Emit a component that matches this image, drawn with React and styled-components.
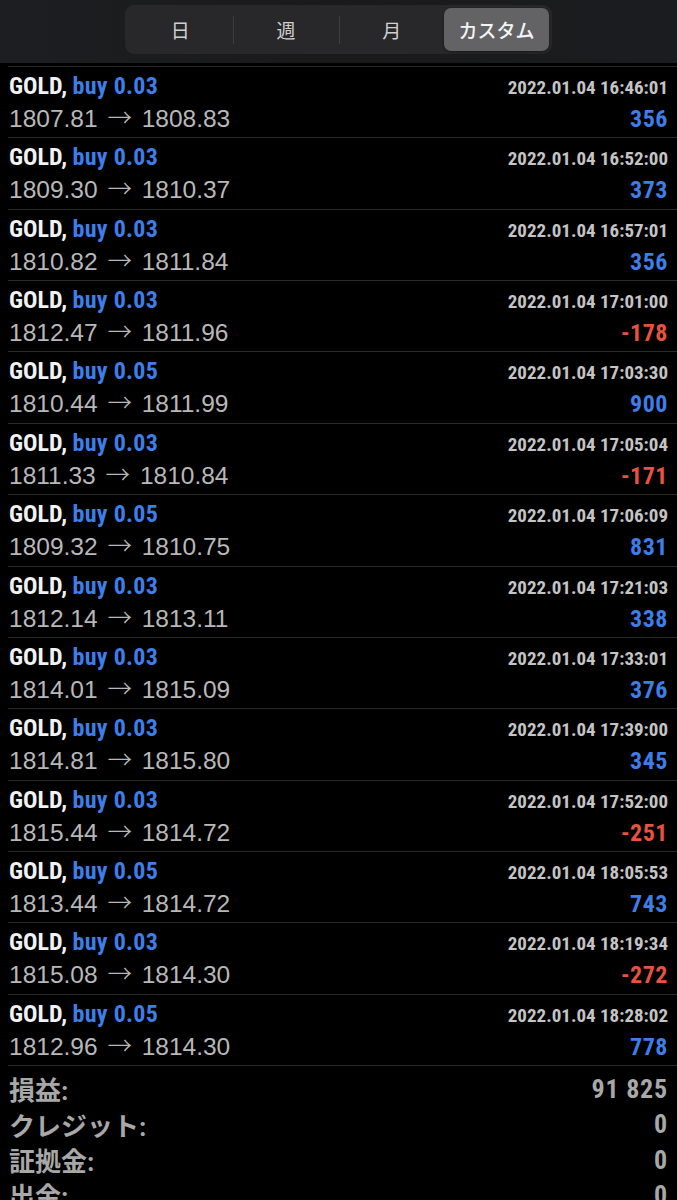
import React from "react";
import styled, { createGlobalStyle } from "styled-components";

const GlobalStyle = createGlobalStyle`
  body {
    margin: 0;
    background: #000;
    font-family: "Liberation Sans", "Noto Sans CJK JP", sans-serif;
  }
`;

// condensed bold face, like the app's Helvetica Condensed
const CONDENSED = `"Roboto", "Noto Sans CJK JP", sans-serif`;

const Screen = styled.div`
  width: 677px;
  height: 1200px;
  overflow: hidden;
  background: #000;
`;

const Header = styled.div`
  height: 63px;
  box-sizing: border-box;
  padding-top: 5px;
  display: flex;
  justify-content: center;
  background: linear-gradient(90deg, #1d1e21 0%, #1a1a1b 50%, #1b1c1f 100%);
`;

const Segments = styled.div`
  width: 427px;
  height: 49px;
  box-sizing: border-box;
  padding: 3px;
  display: flex;
  align-items: stretch;
  border-radius: 9px;
  background: #28282a;
`;

const Segment = styled.div`
  flex: 1;
  display: flex;
  align-items: center;
  justify-content: center;
  border-radius: 7px;
  font-family: "Noto Sans CJK JP", sans-serif;
  font-size: 19px;
  font-weight: ${(p) => (p.active ? 500 : 400)};
  color: ${(p) => (p.active ? "#f4f4f4" : "#d0d0d0")};
  background: ${(p) => (p.active ? "#636366" : "transparent")};
  box-shadow: ${(p) => (p.active ? "0 1px 3px rgba(0,0,0,0.4)" : "none")};
`;

const Divider = styled.div`
  width: 1px;
  height: 28px;
  align-self: center;
  background: ${(p) => (p.hidden ? "transparent" : "#3e3e41")};
`;

const List = styled.div`
  padding-top: 3px;
`;

const Row = styled.div`
  height: 71.36px;
  box-sizing: border-box;
  margin-left: 8px;
  padding: 4px 9px 0 1px;
  border-top: 1px solid #2a2a2c;
  display: flex;
  flex-direction: column;
  gap: 1px;
`;

const Line = styled.div`
  height: 30px;
  display: flex;
  justify-content: space-between;
  align-items: baseline;
  line-height: 30px;
`;

const Symbol = styled.span`
  font-family: ${CONDENSED};
  font-stretch: 75%;
  font-weight: 700;
  font-size: 24px;
  color: #f2f2f2;
`;

const Side = styled.span`
  color: #3d7ee9;
  letter-spacing: 0.3px;
`;

const Time = styled.span`
  font-family: ${CONDENSED};
  font-stretch: 75%;
  font-weight: 700;
  font-size: 19px;
  color: #c4c4c4;
`;

const Prices = styled.span`
  font-family: "Liberation Sans", sans-serif;
  font-size: 24.5px;
  color: #b8b8b8;
`;

const Arrow = styled.span`
  font-family: "Noto Sans CJK JP", sans-serif;
  font-weight: 300;
  margin: 0 3px;
`;

const Profit = styled.span`
  font-family: ${CONDENSED};
  font-stretch: 75%;
  font-weight: 700;
  font-size: 24px;
  letter-spacing: 0.5px;
  color: ${(p) => (p.loss ? "#e8533f" : "#3d7ee9")};
`;

const Summary = styled.div`
  margin-left: 8px;
  padding: 5px 9px 0 1px;
  border-top: 1px solid #2a2a2c;
`;

const SummaryRow = styled.div`
  height: 35.4px;
  display: flex;
  justify-content: space-between;
  align-items: center;
  font-family: ${CONDENSED};
  font-stretch: 75%;
  font-weight: 700;
  font-size: 26px;
  color: #a8a8a8;
`;

const SummaryValue = styled.span`
  letter-spacing: 0.8px;
`;

const trades = [
  ["0.03", "2022.01.04 16:46:01", "1807.81", "1808.83", "356"],
  ["0.03", "2022.01.04 16:52:00", "1809.30", "1810.37", "373"],
  ["0.03", "2022.01.04 16:57:01", "1810.82", "1811.84", "356"],
  ["0.03", "2022.01.04 17:01:00", "1812.47", "1811.96", "-178"],
  ["0.05", "2022.01.04 17:03:30", "1810.44", "1811.99", "900"],
  ["0.03", "2022.01.04 17:05:04", "1811.33", "1810.84", "-171"],
  ["0.05", "2022.01.04 17:06:09", "1809.32", "1810.75", "831"],
  ["0.03", "2022.01.04 17:21:03", "1812.14", "1813.11", "338"],
  ["0.03", "2022.01.04 17:33:01", "1814.01", "1815.09", "376"],
  ["0.03", "2022.01.04 17:39:00", "1814.81", "1815.80", "345"],
  ["0.03", "2022.01.04 17:52:00", "1815.44", "1814.72", "-251"],
  ["0.05", "2022.01.04 18:05:53", "1813.44", "1814.72", "743"],
  ["0.03", "2022.01.04 18:19:34", "1815.08", "1814.30", "-272"],
  ["0.05", "2022.01.04 18:28:02", "1812.96", "1814.30", "778"],
];

const totals = [
  ["損益:", "91 825"],
  ["クレジット:", "0"],
  ["証拠金:", "0"],
  ["出金:", "0"],
];

const tabs = ["日", "週", "月", "カスタム"];
const activeTab = 3;

const App = () => {
  return (
    <Screen>
      <GlobalStyle />
      <Header>
        <Segments>
          {tabs.map((t, i) => (
            <React.Fragment key={t}>
              {i > 0 && <Divider hidden={i === activeTab || i - 1 === activeTab} />}
              <Segment active={i === activeTab}>{t}</Segment>
            </React.Fragment>
          ))}
        </Segments>
      </Header>
      <List>
        {trades.map(([vol, time, open, close, profit], i) => (
          <Row key={`trade-` + i}>
            <Line>
              <Symbol>
                GOLD, <Side>buy {vol}</Side>
              </Symbol>
              <Time>{time}</Time>
            </Line>
            <Line>
              <Prices>
                {open} <Arrow>→</Arrow> {close}
              </Prices>
              <Profit loss={profit.startsWith("-")}>{profit}</Profit>
            </Line>
          </Row>
        ))}
      </List>
      <Summary>
        {totals.map(([label, value]) => (
          <SummaryRow key={label}>
            <span>{label}</span>
            <SummaryValue>{value}</SummaryValue>
          </SummaryRow>
        ))}
      </Summary>
    </Screen>
  );
};

export default App;
